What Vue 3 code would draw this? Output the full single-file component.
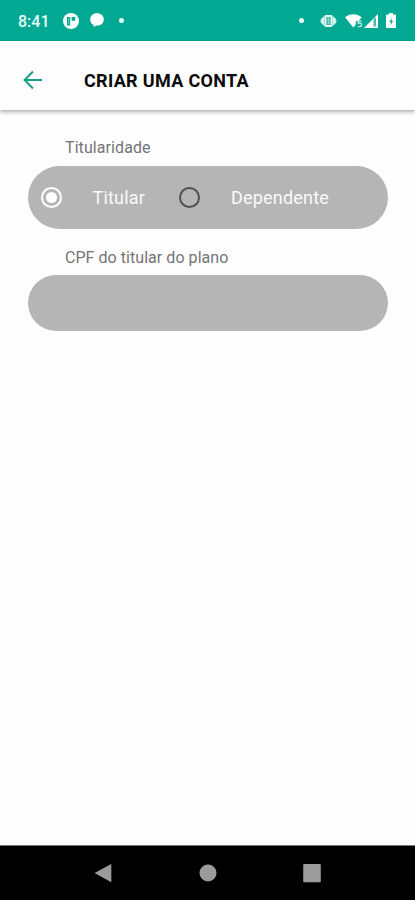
<script setup>
import { ref } from 'vue'

const holder = ref('titular')
const cpf = ref('')
const options = [
  { value: 'titular', label: 'Titular' },
  { value: 'dependente', label: 'Dependente' },
]
</script>

<template>
  <div class="screen">
    <div class="status">
      <span class="clock">8:41</span>
      <svg class="app-icon" viewBox="0 0 16 16">
        <circle cx="8" cy="8" r="8" fill="#fff" />
        <path d="M4 4h3.200v8.500H4zM8.600 4h3.600v3.800H8.600z" fill="#02a992" />
        <path d="M5.300 5.300h.8v6h-.8z" fill="#7fd0c5" />
      </svg>
      <svg class="chat-icon" viewBox="0 0 14 15">
        <path d="M7 .3C3.100.3.2 2.900.2 6.400c0 2.800 1.500 4.800 3.500 5.600v2l3-1.400c4 0 7.100-2.600 7.100-6.200S10.900.3 7 .3z" fill="#fff" />
      </svg>
      <i class="dot"></i>
      <span class="spacer"></span>
      <i class="dot"></i>
      <svg class="cast-icon" viewBox="0 0 17 14">
        <path d="M4.600 2C2.500 3.200.5 5 .5 7s2 3.800 4.100 5zM12.400 2c2.100 1.200 4.100 3 4.100 5s-2 3.800-4.100 5z" fill="#d5f2ee" />
        <rect x="4.600" y="1" width="7.800" height="12" rx="1" fill="#e4f7f4" />
        <rect x="6.400" y="3" width="4.200" height="8" fill="#2fb5a3" />
        <rect x="7.600" y="3.600" width="1.800" height="6.800" fill="#8fd6cc" />
      </svg>
      <svg class="wifi-icon" viewBox="0 0 18 14">
        <path d="M0 3.200C4.700-.7 12-.7 16.700 3.200L13.800 6.700 11 7.200 10.500 11 8.400 13.400z" fill="#fff" />
        <path d="M16.500 7.200h-3.300v2.200c2.200-.6 3.400.1 3.400 1.500 0 1.500-1.700 2.100-3.800 1.300" fill="none" stroke="#c9eee9" stroke-width="1.200" />
      </svg>
      <svg class="signal-icon" viewBox="0 0 14 14">
        <path d="M0 14 14 0v14z" fill="#fff" />
        <path d="M9.500 5.500 12 3v9.500H9.500z" fill="#4bbbac" />
      </svg>
      <svg class="battery-icon" viewBox="0 0 10 15">
        <path d="M3 0h4v1.500h2a1 1 0 0 1 1 1V14a1 1 0 0 1-1 1H1a1 1 0 0 1-1-1V2.500a1 1 0 0 1 1-1h2z" fill="#fff" />
        <path d="M5.600 5 3.300 9h1.500v3L7 8H5.600z" fill="#02a992" />
      </svg>
    </div>

    <header class="bar">
      <svg class="back" viewBox="0 0 20 20">
        <path d="M19 10H2M10 1.500 1.600 10l8.400 8.500" fill="none" stroke="#169f8c" stroke-width="2" />
      </svg>
      <h1>CRIAR UMA CONTA</h1>
    </header>

    <main>
      <div class="label first">Titularidade</div>
      <div class="pill choices">
        <label v-for="o in options" :key="o.value" :class="['option', o.value, { on: holder === o.value }]">
          <input v-model="holder" type="radio" name="holder" :value="o.value" />
          <span class="ring"></span>
          <span class="name">{{ o.label }}</span>
        </label>
      </div>
      <div class="label second">CPF do titular do plano</div>
      <input v-model="cpf" class="pill field" type="text" />
    </main>

    <nav class="nav">
      <svg viewBox="0 0 20 20"><path d="M18.300 1v18.200L1.600 10z" fill="#9c9c9c" /></svg>
      <svg viewBox="0 0 20 20"><circle cx="10" cy="10" r="8.500" fill="#9c9c9c" /></svg>
      <svg viewBox="0 0 20 20"><rect x="1.200" y="1" width="17.600" height="18.300" rx="1" fill="#9c9c9c" /></svg>
    </nav>
  </div>
</template>

<style>
body { background: #fff; }
</style>

<style scoped>
.screen {
  width: 415px;
  height: 900px;
  display: flex;
  flex-direction: column;
  background: #fefefe;
  font-family: Roboto, "Liberation Sans", sans-serif;
  overflow: hidden;
}
.status {
  height: 41px;
  flex: none;
  box-sizing: border-box;
  padding: 0 19px 0 18px;
  display: flex;
  align-items: center;
  background: #02a992;
}
.clock { width: 45px; color: #e9fbf8; font-size: 16px; font-weight: 500; line-height: 20px; padding-top: 2px; box-sizing: border-box; }
.app-icon { width: 16px; height: 16px; }
.chat-icon { width: 14px; height: 15px; margin-left: 11px; }
.dot { width: 5px; height: 5px; border-radius: 50%; background: #e9fbf8; margin-left: 15px; }
.spacer { flex: 1; }
.cast-icon { width: 17px; height: 14px; margin-left: 16px; }
.wifi-icon { width: 18px; height: 14px; margin-left: 8px; }
.signal-icon { width: 14px; height: 14px; margin-left: 1px; }
.battery-icon { width: 10px; height: 15px; margin-left: 8px; }
.bar {
  height: 69px;
  flex: none;
  box-sizing: border-box;
  padding: 9px 0 0 23px;
  display: flex;
  align-items: center;
  background: #fefefe;
  box-shadow: 0 2px 4px rgba(0, 0, 0, 0.32);
}
.back { width: 20px; height: 20px; }
h1 { margin: 1px 0 0 41px; font-size: 18px; line-height: 22px; font-weight: 700; letter-spacing: 0.32px; color: #0b0b0b; }
main { flex: 1; padding: 0 27px 0 28px; display: flex; flex-direction: column; }
.label { padding-left: 37px; font-size: 16px; line-height: 20px; color: #757575; }
.first { margin-top: 28px; letter-spacing: 0.08px; }
.second { margin-top: 19px; letter-spacing: 0.05px; }
.pill { background: #b5b5b5; border-radius: 32px; box-sizing: border-box; }
.choices { height: 63px; margin-top: 8px; padding-left: 12.5px; display: flex; align-items: center; }
.option { display: flex; align-items: center; color: #fafafa; font-size: 18px; line-height: 22px; letter-spacing: 0.2px; }
.option input { appearance: none; width: 0; height: 0; margin: 0; }
.ring {
  width: 21px;
  height: 21px;
  box-sizing: border-box;
  border: 2px solid #505050;
  border-radius: 50%;
  display: flex;
  align-items: center;
  justify-content: center;
}
.on .ring { border-color: #fff; }
.on .ring::after { content: ""; width: 11px; height: 11px; border-radius: 50%; background: #fff; }
.name { margin-left: 31px; }
.titular { width: 138.500px; }
.field { width: 100%; height: 56px; margin-top: 7px; border: 0; padding: 0 37px; font: 18px Roboto, sans-serif; color: #fff; outline: 0; }
.nav {
  height: 55px;
  flex: none;
  box-sizing: border-box;
  padding: 0 93px;
  border-top: 1px solid #777;
  display: flex;
  justify-content: space-between;
  align-items: center;
  background: #000;
}
.nav svg { width: 20px; height: 20px; }
</style>
